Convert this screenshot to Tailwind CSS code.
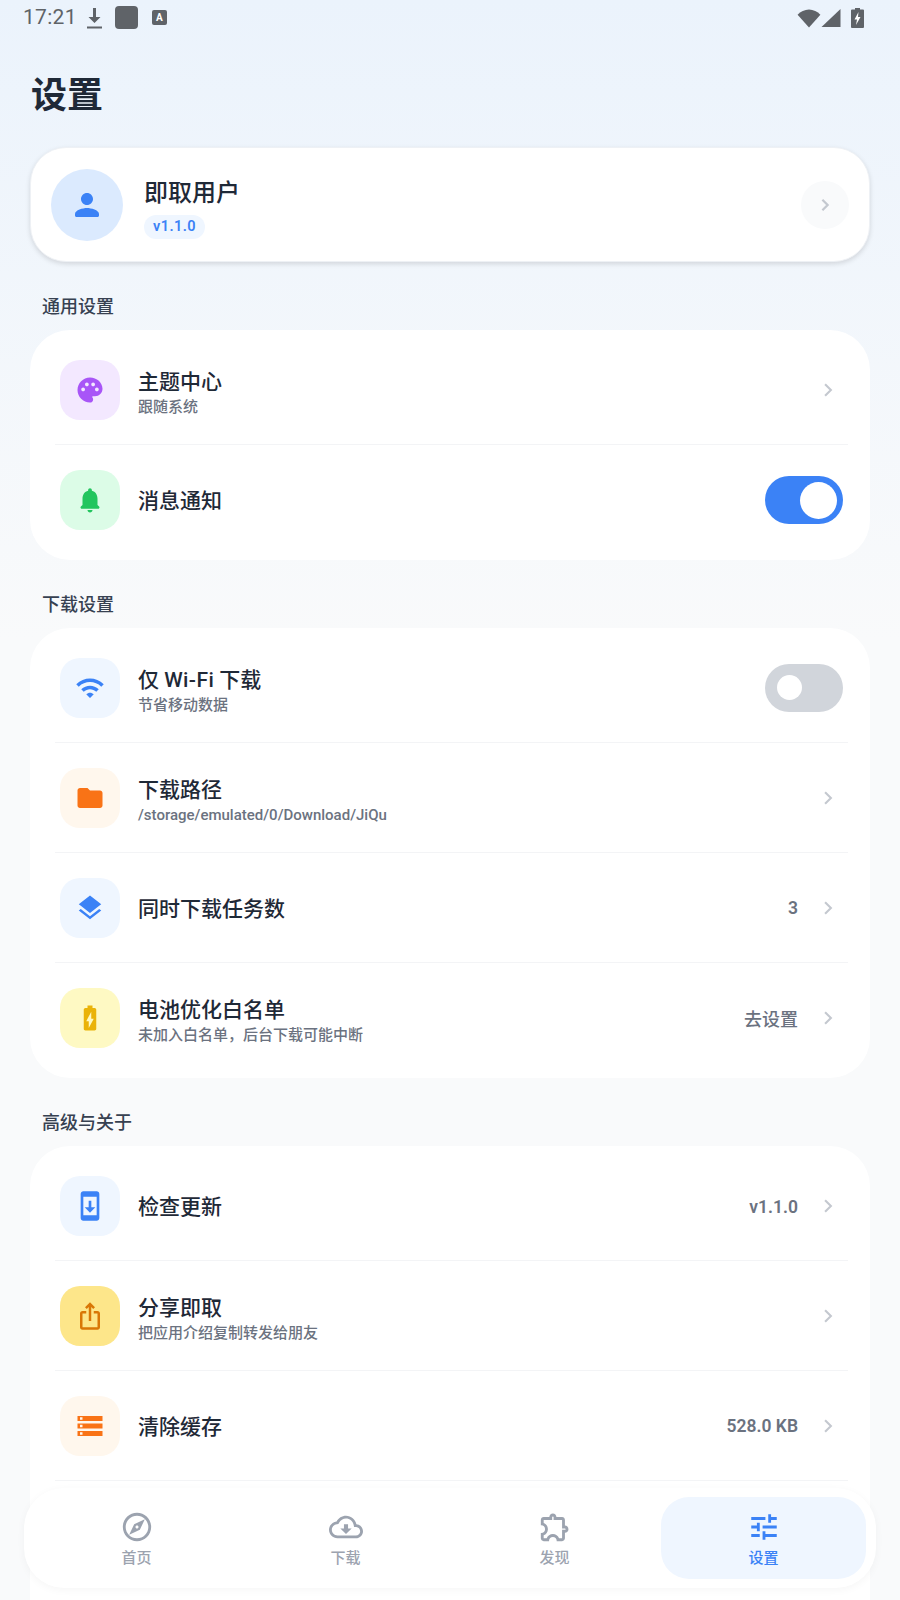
<!DOCTYPE html>
<html lang="zh-CN">
<head>
  <meta charset="UTF-8" />
  <meta name="viewport" content="width=device-width, initial-scale=1.0"/>
  <title>设置</title>
  <script src="https://cdn.jsdelivr.net/npm/@tailwindcss/browser@4"></script>
</head>
<body class="font-['Roboto','Noto_Sans_CJK_SC',sans-serif] text-[#1f2937]">
  <div class="relative w-[900px] h-[1600px] overflow-hidden bg-[linear-gradient(to_bottom,#ebf3fc_0px,#f9fafb_640px)]">

    <!-- Status bar -->
    <div class="h-9 flex items-center justify-between pl-[23px] pr-[36px] pb-[1px] text-[#5f6368]">
      <div class="flex items-center">
        <span class="text-[21px] leading-none tracking-[0.3px] mb-[1px]">17:21</span>
        <svg class="w-[17px] h-[22px] ml-[9px]" viewBox="0 0 17 22" fill="#5f6368"><path d="M7 1h3v9h4.500l-6 6-6-6H7zM1 19.500h15V21.500H1z"/></svg>
        <div class="w-[23px] h-[23px] rounded-[4px] bg-[#5f6368] ml-[12px]"></div>
        <div class="w-[15px] h-[15px] rounded-[2px] bg-[#5f6368] ml-[14px] flex items-center justify-center text-white text-[10px] font-bold leading-none">A</div>
      </div>
      <div class="flex items-center">
        <svg class="w-[24px] h-[20px]" viewBox="0 0 24 20" fill="#5f6368"><path d="M12 19.500.6 6.800C3.600 3.800 7.600 1.600 12 1.600s8.400 2.200 11.400 5.200z"/></svg>
        <svg class="w-[20px] h-[20px]" viewBox="0 0 20 20" fill="#5f6368"><path d="M19.500 1v18H.5z"/></svg>
        <svg class="w-[13px] h-[20px] ml-[10px]" viewBox="0 0 13 20" fill="#5f6368"><path d="M4 0h5v1.500h3a1 1 0 0 1 1 1V19a1 1 0 0 1-1 1H1a1 1 0 0 1-1-1V2.500a1 1 0 0 1 1-1h3z"/><path fill="#fff" d="M7.500 4 3.500 11.500h2.500L5 17l4.500-8H7z"/></svg>
      </div>
    </div>

    <!-- Title -->
    <h1 class="pl-[31px] pt-[36px] pb-[27px] text-[36px] leading-[48px] font-bold">设置</h1>

    <!-- Profile card -->
    <div class="mx-[30px] h-[115px] rounded-[36px] bg-white border border-[#eef1f5] shadow-[0_2px_5px_rgba(0,0,0,0.13)] flex items-center pl-[20px] pr-[20px]">
      <div class="w-[72px] h-[72px] rounded-full bg-[#dbeafe] flex items-center justify-center">
        <svg class="w-9 h-9" viewBox="0 0 24 24" fill="#3b82f6"><path d="M12 12c2.210 0 4-1.790 4-4s-1.790-4-4-4-4 1.790-4 4 1.790 4 4 4zm0 2c-2.670 0-8 1.340-8 4v1c0 .55.45 1 1 1h14c.55 0 1-.45 1-1v-1c0-2.660-5.330-4-8-4z"/></svg>
      </div>
      <div class="ml-[21px] flex-1 pt-[7px]">
        <div class="text-[24px] leading-[32px] font-medium">即取用户</div>
        <div class="mt-[6px] w-[61px] h-[24px] rounded-full bg-[#eff6ff] flex items-center justify-center text-[14.500px] font-semibold tracking-[0.4px] text-[#3b82f6]">v1.1.0</div>
      </div>
      <div class="w-12 h-12 rounded-full bg-[#f9fafb] flex items-center justify-center">
        <svg class="w-[18px] h-[18px]" viewBox="0 0 24 24" fill="none" stroke="#c4c8cf" stroke-width="3"><path d="M8.500 5l7 7-7 7"/></svg>
      </div>
    </div>

    <!-- 通用设置 -->
    <div class="pt-[33px] px-[30px]">
      <div class="px-3 mb-[11px] text-[18px] leading-6 font-medium text-[#374151]">通用设置</div>
      <div class="rounded-[40px] bg-white py-[5px]">
        <div class="ml-[25px] mr-[22px] h-[110px] flex items-center border-b border-[#f3f4f6]">
          <div class="w-[60px] h-[60px] ml-[5px] rounded-[20px] bg-[#f3e8ff] flex items-center justify-center">
            <svg class="w-[30px] h-[30px]" viewBox="0 0 24 24" fill="#a855f7"><path d="M12 2C6.490 2 2 6.490 2 12s4.490 10 10 10c1.380 0 2.500-1.120 2.500-2.500 0-.61-.23-1.200-.64-1.670-.08-.1-.13-.21-.13-.33 0-.28.22-.5.5-.5H16c3.310 0 6-2.690 6-6 0-4.960-4.490-9-10-9zm5.500 11c-.83 0-1.500-.67-1.500-1.500s.67-1.500 1.500-1.500 1.500.67 1.500 1.500-.67 1.500-1.500 1.500zm-3-4c-.83 0-1.500-.67-1.500-1.500S13.670 6 14.500 6s1.500.67 1.500 1.500S15.330 9 14.500 9zM5 11.500c0-.83.67-1.500 1.500-1.500s1.500.67 1.500 1.500S7.330 13 6.500 13 5 12.330 5 11.500zm6-4c0 .83-.67 1.500-1.500 1.500S8 8.330 8 7.500 8.670 6 9.500 6s1.500.67 1.500 1.500z"/></svg>
          </div>
          <div class="ml-[18px] flex-1 pt-[6px]">
            <div class="text-[21px] leading-[27px] font-medium">主题中心</div>
            <div class="mt-[1px] text-[15px] leading-[20px] font-medium text-[#6b7280]">跟随系统</div>
          </div>
          <svg class="w-[20px] h-[20px] mr-[10px]" viewBox="0 0 24 24" fill="none" stroke="#c4c8cf" stroke-width="2.500"><path d="M8.500 5l7 7-7 7"/></svg>
        </div>
        <div class="ml-[25px] mr-[22px] h-[110px] flex items-center">
          <div class="w-[60px] h-[60px] ml-[5px] rounded-[20px] bg-[#dcfce7] flex items-center justify-center">
            <svg class="w-[30px] h-[30px]" viewBox="0 0 24 24" fill="#22c55e"><path d="M12 22c1.100 0 2-.9 2-2h-4c0 1.100.9 2 2 2zm6-6v-5c0-3.070-1.630-5.640-4.500-6.320V4c0-.83-.67-1.500-1.500-1.500s-1.500.67-1.500 1.500v.68C7.640 5.360 6 7.920 6 11v5l-1.290 1.290c-.63.63-.19 1.710.7 1.710h13.170c.89 0 1.340-1.080.71-1.710L18 16z"/></svg>
          </div>
          <div class="ml-[18px] flex-1 pt-[4px] text-[21px] font-medium">消息通知</div>
          <div class="w-[78px] h-[48px] rounded-full bg-[#3b82f6] mr-[5px] flex items-center justify-end pr-[6px]">
            <div class="w-[37px] h-[37px] rounded-full bg-white"></div>
          </div>
        </div>
      </div>
    </div>

    <!-- 下载设置 -->
    <div class="pt-[33px] px-[30px]">
      <div class="px-3 mb-[11px] text-[18px] leading-6 font-medium text-[#374151]">下载设置</div>
      <div class="rounded-[40px] bg-white py-[5px]">
        <div class="ml-[25px] mr-[22px] h-[110px] flex items-center border-b border-[#f3f4f6]">
          <div class="w-[60px] h-[60px] ml-[5px] rounded-[20px] bg-[#eff6ff] flex items-center justify-center">
            <svg class="w-[30px] h-[30px]" viewBox="0 0 24 24" fill="#3b82f6"><path d="M1 9l2 2c4.970-4.970 13.030-4.970 18 0l2-2C16.930 2.930 7.080 2.930 1 9zm8 8l3 3 3-3c-1.650-1.660-4.340-1.660-6 0zm-4-4l2 2c2.760-2.760 7.240-2.760 10 0l2-2C15.140 9.140 8.870 9.140 5 13z"/></svg>
          </div>
          <div class="ml-[18px] flex-1 pt-[6px]">
            <div class="text-[21px] leading-[27px] font-medium">仅 <span class="tracking-[0.4px]">Wi-Fi</span> 下载</div>
            <div class="mt-[1px] text-[15px] leading-[20px] font-medium text-[#6b7280]">节省移动数据</div>
          </div>
          <div class="w-[78px] h-[48px] rounded-full bg-[#d1d5db] mr-[5px] flex items-center pl-[12px]">
            <div class="w-[25px] h-[25px] rounded-full bg-white"></div>
          </div>
        </div>
        <div class="ml-[25px] mr-[22px] h-[110px] flex items-center border-b border-[#f3f4f6]">
          <div class="w-[60px] h-[60px] ml-[5px] rounded-[20px] bg-[#fff7ed] flex items-center justify-center">
            <svg class="w-[30px] h-[30px]" viewBox="0 0 24 24" fill="#f97316"><path d="M10 4H4c-1.100 0-1.990.9-1.990 2L2 18c0 1.100.9 2 2 2h16c1.100 0 2-.9 2-2V8c0-1.100-.9-2-2-2h-8l-2-2z"/></svg>
          </div>
          <div class="ml-[18px] flex-1 pt-[6px]">
            <div class="text-[21px] leading-[27px] font-medium">下载路径</div>
            <div class="mt-[1px] text-[15px] leading-[20px] font-medium text-[#6b7280]">/storage/emulated/0/Download/JiQu</div>
          </div>
          <svg class="w-[20px] h-[20px] mr-[10px]" viewBox="0 0 24 24" fill="none" stroke="#c4c8cf" stroke-width="2.500"><path d="M8.500 5l7 7-7 7"/></svg>
        </div>
        <div class="ml-[25px] mr-[22px] h-[110px] flex items-center border-b border-[#f3f4f6]">
          <div class="w-[60px] h-[60px] ml-[5px] rounded-[20px] bg-[#eff6ff] flex items-center justify-center">
            <svg class="w-[30px] h-[30px]" viewBox="0 0 24 24" fill="#3b82f6"><path d="M11.990 18.540l-7.370-5.730L3 14.070l9 7 9-7-1.630-1.270-7.380 5.740zM12 16l7.360-5.730L21 9l-9-7-9 7 1.630 1.270L12 16z"/></svg>
          </div>
          <div class="ml-[18px] flex-1 pt-[4px] text-[21px] font-medium">同时下载任务数</div>
          <span class="pt-[2px] text-[17.500px] font-semibold text-[#6b7280] mr-[20px]">3</span>
          <svg class="w-[20px] h-[20px] mr-[10px]" viewBox="0 0 24 24" fill="none" stroke="#c4c8cf" stroke-width="2.500"><path d="M8.500 5l7 7-7 7"/></svg>
        </div>
        <div class="ml-[25px] mr-[22px] h-[110px] flex items-center">
          <div class="w-[60px] h-[60px] ml-[5px] rounded-[20px] bg-[#fef9c3] flex items-center justify-center">
            <svg class="w-[30px] h-[30px]" viewBox="0 0 24 24" fill="#eab308"><path d="M15.670 4H14V2h-4v2H8.330C7.600 4 7 4.600 7 5.330v15.330C7 21.400 7.600 22 8.330 22h7.330c.74 0 1.340-.6 1.340-1.330V5.330C17 4.600 16.400 4 15.670 4zM11 20v-5.500H9L13 7v5.500h2L11 20z"/></svg>
          </div>
          <div class="ml-[18px] flex-1 pt-[6px]">
            <div class="text-[21px] leading-[27px] font-medium">电池优化白名单</div>
            <div class="mt-[1px] text-[15px] leading-[20px] font-medium text-[#6b7280]">未加入白名单，后台下载可能中断</div>
          </div>
          <span class="pt-[2px] text-[18px] font-medium text-[#6b7280] mr-[20px]">去设置</span>
          <svg class="w-[20px] h-[20px] mr-[10px]" viewBox="0 0 24 24" fill="none" stroke="#c4c8cf" stroke-width="2.500"><path d="M8.500 5l7 7-7 7"/></svg>
        </div>
      </div>
    </div>

    <!-- 高级与关于 -->
    <div class="pt-[33px] px-[30px]">
      <div class="px-3 mb-[11px] text-[18px] leading-6 font-medium text-[#374151]">高级与关于</div>
      <div class="rounded-t-[40px] bg-white pt-[5px] h-[500px]">
        <div class="ml-[25px] mr-[22px] h-[110px] flex items-center border-b border-[#f3f4f6]">
          <div class="w-[60px] h-[60px] ml-[5px] rounded-[20px] bg-[#eff6ff] flex items-center justify-center">
            <svg class="w-[32px] h-[32px]" viewBox="0 0 24 24" fill="#3b82f6"><path d="M17 1.010L7 1c-1.100 0-2 .9-2 2v18c0 1.100.9 2 2 2h10c1.100 0 2-.9 2-2V3c0-1.100-.9-1.990-2-1.990zM17 19H7V5h10v14zm-1-6h-3V8h-2v5H8l4 4 4-4z"/></svg>
          </div>
          <div class="ml-[18px] flex-1 pt-[4px] text-[21px] font-medium">检查更新</div>
          <span class="pt-[3px] text-[17.500px] font-semibold text-[#6b7280] mr-[20px]">v1.1.0</span>
          <svg class="w-[20px] h-[20px] mr-[10px]" viewBox="0 0 24 24" fill="none" stroke="#c4c8cf" stroke-width="2.500"><path d="M8.500 5l7 7-7 7"/></svg>
        </div>
        <div class="ml-[25px] mr-[22px] h-[110px] flex items-center border-b border-[#f3f4f6]">
          <div class="w-[60px] h-[60px] ml-[5px] rounded-[20px] bg-[#fde68a] flex items-center justify-center">
            <svg class="w-[30px] h-[30px]" viewBox="0 0 24 24" fill="#d97706"><path d="M16 5l-1.420 1.420-1.590-1.590V16h-1.980V4.830L9.420 6.420 8 5l4-4 4 4zm4 5v11c0 1.100-.9 2-2 2H6c-1.110 0-2-.9-2-2V10c0-1.110.89-2 2-2h3v2H6v11h12V10h-3V8h3c1.100 0 2 .89 2 2z"/></svg>
          </div>
          <div class="ml-[18px] flex-1 pt-[6px]">
            <div class="text-[21px] leading-[27px] font-medium">分享即取</div>
            <div class="mt-[1px] text-[15px] leading-[20px] font-medium text-[#6b7280]">把应用介绍复制转发给朋友</div>
          </div>
          <svg class="w-[20px] h-[20px] mr-[10px]" viewBox="0 0 24 24" fill="none" stroke="#c4c8cf" stroke-width="2.500"><path d="M8.500 5l7 7-7 7"/></svg>
        </div>
        <div class="ml-[25px] mr-[22px] h-[110px] flex items-center border-b border-[#f3f4f6]">
          <div class="w-[60px] h-[60px] ml-[5px] rounded-[20px] bg-[#fff7ed] flex items-center justify-center">
            <svg class="w-[30px] h-[30px]" viewBox="0 0 24 24" fill="#f97316"><path d="M2 20h20v-4H2v4zm2-3h2v2H4v-2zM2 4v4h20V4H2zm4 3H4V5h2v2zm-4 7h20v-4H2v4zm2-3h2v2H4v-2z"/></svg>
          </div>
          <div class="ml-[18px] flex-1 pt-[4px] text-[21px] font-medium">清除缓存</div>
          <span class="pt-[2px] text-[17.500px] font-semibold text-[#6b7280] mr-[20px]">528.0 KB</span>
          <svg class="w-[20px] h-[20px] mr-[10px]" viewBox="0 0 24 24" fill="none" stroke="#c4c8cf" stroke-width="2.500"><path d="M8.500 5l7 7-7 7"/></svg>
        </div>
      </div>
    </div>

    <!-- Bottom nav, floats over the list -->
    <nav class="absolute left-[24px] top-[1488px] w-[852px] h-[100px] py-[9px] px-[10px] rounded-[40px] bg-white shadow-[0_2px_8px_rgba(0,0,0,0.04)] grid grid-cols-4 gap-1">
      <div class="flex flex-col items-center pt-[13px] rounded-[28px]">
        <svg class="w-[34px] h-[34px]" viewBox="0 0 24 24" fill="#9ca3af"><path d="M12 2C6.480 2 2 6.480 2 12s4.480 10 10 10 10-4.480 10-10S17.520 2 12 2zm0 18c-4.410 0-8-3.590-8-8s3.590-8 8-8 8 3.590 8 8-3.590 8-8 8zm-5.500-2.500l7.510-3.490L17.500 6.500 9.990 9.990 6.500 17.500zm5.500-6.600c.61 0 1.100.49 1.100 1.100s-.49 1.100-1.100 1.100-1.100-.49-1.100-1.100.49-1.100 1.100-1.100z"/></svg>
        <span class="mt-[4px] text-[15px] leading-[20px] font-medium text-[#9ca3af]">首页</span>
      </div>
      <div class="flex flex-col items-center pt-[13px] rounded-[28px]">
        <svg class="w-[34px] h-[34px]" viewBox="0 0 24 24" fill="#9ca3af"><path d="M19.350 10.040C18.670 6.590 15.640 4 12 4 9.110 4 6.600 5.640 5.350 8.040 2.340 8.360 0 10.910 0 14c0 3.310 2.690 6 6 6h13c2.760 0 5-2.240 5-5 0-2.640-2.050-4.780-4.650-4.960zM19 18H6c-2.210 0-4-1.790-4-4 0-2.050 1.530-3.760 3.560-3.970l1.070-.11.5-.95C8.080 7.140 9.940 6 12 6c2.620 0 4.880 1.860 5.390 4.430l.3 1.500 1.530.11c1.560.1 2.780 1.410 2.780 2.960 0 1.650-1.350 3-3 3zm-5.550-8h-2.900v3H8l4 4 4-4h-2.550z"/></svg>
        <span class="mt-[4px] text-[15px] leading-[20px] font-medium text-[#9ca3af]">下载</span>
      </div>
      <div class="flex flex-col items-center pt-[13px] rounded-[28px]">
        <svg class="w-[34px] h-[34px]" viewBox="0 0 24 24" fill="#9ca3af"><path d="M10.500 4.500c.28 0 .5.22.5.5v2h6v6h2c.28 0 .5.22.5.5s-.22.5-.5.5h-2v6h-2.120c-.68-1.750-2.390-3-4.380-3s-3.700 1.250-4.380 3H4v-2.120c1.750-.68 3-2.390 3-4.380 0-1.990-1.240-3.700-2.990-4.380L4 7h6V5c0-.28.22-.5.5-.5m0-2C9.120 2.500 8 3.620 8 5H4c-1.100 0-1.990.9-1.990 2v3.800h.29c1.490 0 2.700 1.210 2.700 2.700s-1.210 2.700-2.700 2.700H2V20c0 1.100.9 2 2 2h3.800v-.3c0-1.490 1.210-2.700 2.700-2.700s2.700 1.210 2.700 2.700v.3H17c1.100 0 2-.9 2-2v-4c1.380 0 2.500-1.120 2.500-2.500S20.380 11 19 11V7c0-1.100-.9-2-2-2h-4c0-1.380-1.120-2.500-2.500-2.500z"/></svg>
        <span class="mt-[4px] text-[15px] leading-[20px] font-medium text-[#9ca3af]">发现</span>
      </div>
      <div class="flex flex-col items-center pt-[13px] rounded-[28px] bg-[#eff6ff]">
        <svg class="w-[34px] h-[34px]" viewBox="0 0 24 24" fill="#3b82f6"><path d="M3 17v2h6v-2H3zM3 5v2h10V5H3zm10 16v-2h8v-2h-8v-2h-2v6h2zM7 9v2H3v2h4v2h2V9H7zm14 4v-2H11v2h10zm-6-4h2V7h4V5h-4V3h-2v6z"/></svg>
        <span class="mt-[4px] text-[15px] leading-[20px] font-medium text-[#3b82f6]">设置</span>
      </div>
    </nav>
  </div>
</body>
</html>
